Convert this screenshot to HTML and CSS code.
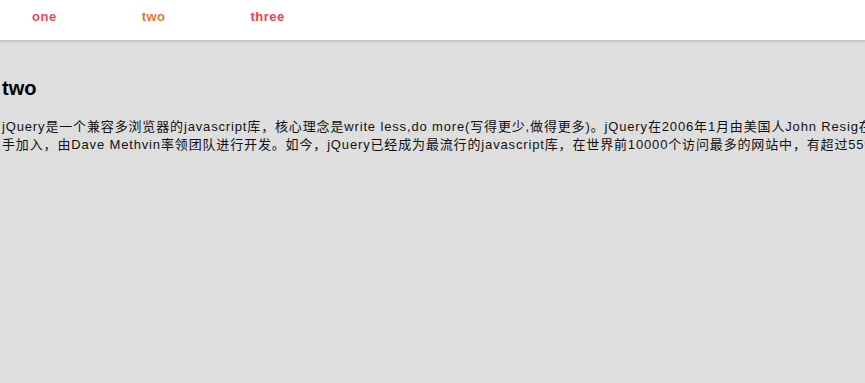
FILE: index.html
```html
<!DOCTYPE html>
<html lang="zh-CN">
<head>
    <meta charset="UTF-8">
    <meta name="viewport" content="width=device-width, initial-scale=1.0">
    <title>Tabs</title>
    <link rel="stylesheet" href="styles.css">
</head>
<body>
    <ul class="tabs">
        <li class="tab tab-one">one</li>
        <li class="tab tab-two">two</li>
        <li class="tab tab-three">three</li>
    </ul>

    <div class="panel">
        <h2>two</h2>
        <p>jQuery是一个兼容多浏览器的javascript库，核心理念是write less,do more(写得更少,做得更多)。jQuery在2006年1月由美国人John Resig在纽约的barcamp发布，吸引了来自世界各地的众多JavaScript高手加入，由Dave Methvin率领团队进行开发。如今，jQuery已经成为最流行的javascript库，在世界前10000个访问最多的网站中，有超过55%在使用jQuery。</p>
    </div>
</body>
</html>
```

FILE: styles.css
```css
* {
    margin: 0;
    padding: 0;
    box-sizing: border-box;
}

body {
    background-color: #dedede;
    font-family: "Liberation Sans", Arial, "Noto Sans CJK SC", sans-serif;
    overflow: hidden;
}

.tabs {
    list-style: none;
    display: flex;
    gap: 85px;
    height: 41px;
    padding: 9px 0 0 32px;
    background-color: #fff;
    border-bottom: 1px solid #c4c4c4;
    box-shadow: 0 1px 2px rgba(0, 0, 0, 0.12);
}

.tab {
    font-size: 13px;
    font-weight: bold;
    line-height: 16px;
    letter-spacing: 0.5px;
    cursor: pointer;
}

.tab-one {
    color: #e84a5a;
}

.tab-two {
    color: #e07b2e;
}

.tab-three {
    color: #e8424e;
}

.panel {
    padding: 36px 0 0 2px;
}

.panel h2 {
    font-size: 20px;
    line-height: 23px;
    color: #000;
}

.panel p {
    width: 1260px;
    margin-top: 18px;
    font-size: 13px;
    line-height: 18px;
    letter-spacing: 0.85px;
    color: #111;
}
```
